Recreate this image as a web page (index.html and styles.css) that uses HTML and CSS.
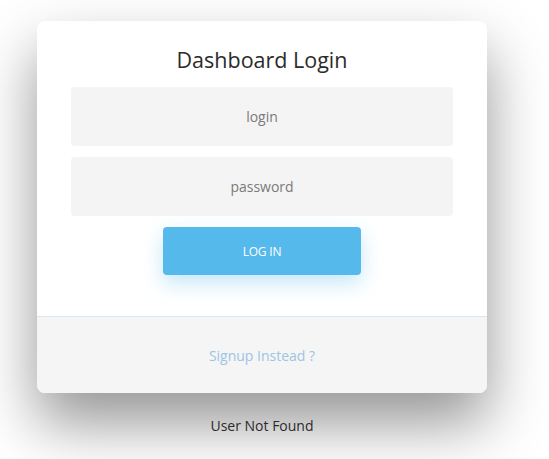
FILE: index.html
```html
<!DOCTYPE html>
<html>
<head>
<meta charset="utf-8">
<link rel="stylesheet" href="styles.css">
</head>
<body>
<div class="page">
  <div class="card">
    <div class="card-main">
      <h1 class="title">Dashboard Login</h1>
      <div class="field">login</div>
      <div class="field">password</div>
      <button class="btn">LOG IN</button>
    </div>
    <div class="card-foot">
      <span class="signup">Signup Instead ?</span>
    </div>
  </div>
  <div class="status">User Not Found</div>
</div>
</body>
</html>
```

FILE: styles.css
```css
html, body {
  margin: 0;
  padding: 0;
  background: #ffffff;
}
body {
  font-family: "Open Sans", "Noto Sans", sans-serif;
  color: #333;
}
.page {
  width: 524px;
  min-height: 459px;
  box-sizing: border-box;
  padding-top: 21px;
  display: flex;
  flex-direction: column;
  align-items: center;
}
.card {
  width: 450px;
  background: #fff;
  border-radius: 8px;
  overflow: hidden;
  box-shadow: 0 30px 60px rgba(0,0,0,0.42);
}
.card-main {
  padding: 24px 34px 41px;
  display: flex;
  flex-direction: column;
  align-items: center;
  gap: 11px;
  border-bottom: 1px solid #d6e7f3;
}
.title {
  margin: 0 0 1px;
  font-weight: 400;
  font-size: 21.5px;
  line-height: 30px;
  color: #2b2b2b;
}
.field {
  align-self: stretch;
  height: 59px;
  background: #f4f4f4;
  border-radius: 4px;
  display: flex;
  align-items: center;
  justify-content: center;
  font-size: 14px;
  color: #7a7a7a;
}
.btn {
  width: 198px;
  height: 48px;
  border: none;
  border-radius: 4px;
  background: #56b9ec;
  color: #fff;
  font-family: inherit;
  font-size: 12px;
  letter-spacing: -0.2px;
  box-shadow: 0 8px 20px rgba(86,185,236,0.35);
}
.card-foot {
  height: 76px;
  background: #f5f5f5;
  display: flex;
  align-items: center;
  justify-content: center;
}
.signup {
  font-size: 14px;
  color: #9cc4e4;
}
.status {
  margin-top: 23px;
  font-size: 14px;
  color: #2b2b2b;
}
```
